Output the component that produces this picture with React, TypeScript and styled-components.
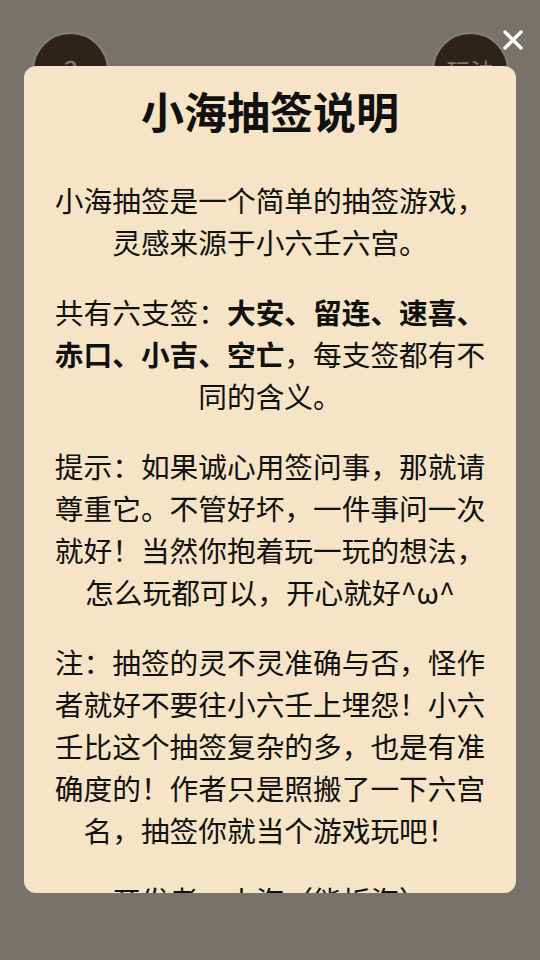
import React from 'react'
import styled, { createGlobalStyle } from 'styled-components'

const GlobalStyle = createGlobalStyle`
  html, body {
    margin: 0;
    padding: 0;
    height: 100%;
  }
  body {
    font-family: "Noto Sans CJK SC", "Noto Sans", sans-serif;
    background: #eee6d4;
  }
  #root {
    height: 100%;
  }
`

const Page = styled.div`
  position: relative;
  width: 540px;
  height: 960px;
  overflow: hidden;
  background: #eee6d4;
`

const TopBar = styled.div`
  display: flex;
  justify-content: space-between;
  padding: 32px 31px 0 32px;
`

const RoundButton = styled.button<{ $small?: boolean }>`
  width: 77px;
  height: 77px;
  border-radius: 50%;
  border: 2px solid #ffffff;
  box-shadow: 0 0 2px rgba(255, 255, 255, 0.6);
  background: #5b4731;
  color: #f4ede0;
  font-family: "Noto Sans CJK SC", sans-serif;
  font-size: ${(p) => (p.$small ? '24px' : '30px')};
  line-height: 1;
  padding: 0;
  display: flex;
  align-items: center;
  justify-content: center;
`

const Overlay = styled.div`
  position: absolute;
  inset: 0;
  background: rgba(0, 0, 0, 0.5);
  display: flex;
  flex-direction: column;
  align-items: center;
  padding-top: 66px;
`

const CloseButton = styled.button`
  position: absolute;
  top: 28px;
  right: 15px;
  width: 24px;
  height: 24px;
  padding: 0;
  border: none;
  background: none;
  display: flex;
  align-items: center;
  justify-content: center;
`

const Card = styled.div`
  width: 492px;
  height: 827px;
  box-sizing: border-box;
  background: #f5e4c6;
  border-radius: 12px;
  padding: 12px 28px 0;
  overflow: hidden;
  color: #111;
  text-align: center;
`

const Title = styled.h2`
  margin: 0 0 37px;
  font-size: 43px;
  line-height: 64px;
  font-weight: 700;
`

const Para = styled.p`
  margin: 0 0 28px;
  font-size: 28.7px;
  line-height: 42px;
  font-weight: 400;
`

const Strong = styled.b`
  font-weight: 700;
`

export default function App() {
  return (
    <Page>
      <GlobalStyle />
      <TopBar>
        <RoundButton>?</RoundButton>
        <RoundButton $small>玩法</RoundButton>
      </TopBar>
      <Overlay>
        <CloseButton aria-label="关闭">
          <svg width="22" height="22" viewBox="0 0 22 22">
            <path d="M3 3 L19 19 M19 3 L3 19" stroke="#fff" strokeWidth="3.4" strokeLinecap="round" />
          </svg>
        </CloseButton>
        <Card>
          <Title>小海抽签说明</Title>
          <Para>小海抽签是一个简单的抽签游戏，灵感来源于小六壬六宫。</Para>
          <Para>
            共有六支签：<Strong>大安、留连、速喜、赤口、小吉、空亡</Strong>，每支签都有不同的含义。
          </Para>
          <Para>提示：如果诚心用签问事，那就请尊重它。不管好坏，一件事问一次就好！当然你抱着玩一玩的想法，怎么玩都可以，开心就好^ω^</Para>
          <Para>注：抽签的灵不灵准确与否，怪作者就好不要往小六壬上埋怨！小六壬比这个抽签复杂的多，也是有准确度的！作者只是照搬了一下六宫名，抽签你就当个游戏玩吧！</Para>
          <Para>开发者：小海（能折海）</Para>
        </Card>
      </Overlay>
    </Page>
  )
}
